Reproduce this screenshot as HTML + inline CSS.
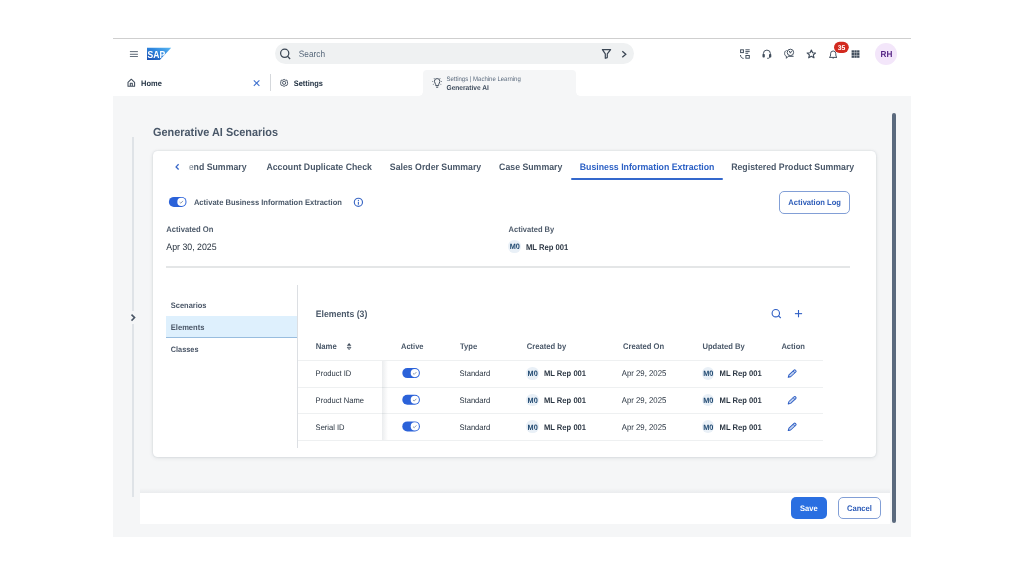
<!DOCTYPE html>
<html><head><meta charset="utf-8"><style>
html,body{margin:0;padding:0;background:#fff;width:1024px;height:576px;overflow:hidden}
body{position:relative;font-family:"Liberation Sans",sans-serif}
.r{position:absolute}
svg.ov{position:absolute;left:0;top:0;will-change:transform}
svg.ov text{font-family:"Liberation Sans",sans-serif;text-rendering:geometricPrecision}
</style></head><body>
<div class="r" style="left:113px;top:38px;width:798px;height:1px;background:#cfcfcf"></div>
<div class="r" style="left:113px;top:39px;width:798px;height:57px;background:#fff"></div>
<div class="r" style="left:113px;top:96px;width:798px;height:441px;background:#f5f6f7"></div>
<div class="r" style="left:275px;top:42.8px;width:359px;height:21.4px;background:#eff1f2;border-radius:10.7px"></div>
<div class="r" style="left:875.3px;top:43.2px;width:22px;height:22px;background:#f3e6fa;border-radius:50%"></div>
<div class="r" style="left:269.8px;top:74.3px;width:1.1px;height:17.2px;background:#d5d8dc"></div>
<div class="r" style="left:423px;top:70px;width:153px;height:26px;background:#f5f6f7;border-radius:4px 4px 0 0"></div>
<div class="r" style="left:419px;top:92px;width:4px;height:4px;background:radial-gradient(circle at 0 0,#fff 3.5px,#f5f6f7 4px)"></div>
<div class="r" style="left:576px;top:92px;width:4px;height:4px;background:radial-gradient(circle at 100% 0,#fff 3.5px,#f5f6f7 4px)"></div>
<div class="r" style="left:132.2px;top:137px;width:1.8px;height:173.6px;background:#dfe3e7"></div>
<div class="r" style="left:132.2px;top:324px;width:1.8px;height:173px;background:#dfe3e7"></div>
<div class="r" style="left:152.6px;top:150.8px;width:723.6px;height:306px;background:#fff;border-radius:4.5px;box-shadow:0 0 2px rgba(34,53,72,.15),0 1px 4px rgba(34,53,72,.10)"></div>
<div class="r" style="left:570.5px;top:177.8px;width:152.3px;height:2px;background:#3468cc;border-radius:1px"></div>
<div class="r" style="left:779px;top:191.2px;width:71px;height:22.4px;box-sizing:border-box;border:1px solid #829fd6;border-radius:5px;background:#fff"></div>
<div class="r" style="left:508.4px;top:240.0px;width:12.6px;height:12.6px;background:#e9f0f7;border-radius:50%"></div>
<div class="r" style="left:166px;top:266.1px;width:684px;height:1.8px;background:#e4e6e7"></div>
<div class="r" style="left:166.3px;top:316px;width:130.5px;height:21px;background:#def0fd"></div>
<div class="r" style="left:166.3px;top:336.6px;width:130.5px;height:1px;background:#98bddf"></div>
<div class="r" style="left:297px;top:285px;width:1px;height:163px;background:#dcdfe3"></div>
<div class="r" style="left:298px;top:360px;width:525px;height:1px;background:#eef0f1"></div>
<div class="r" style="left:298px;top:386.6px;width:525px;height:1px;background:#eef0f1"></div>
<div class="r" style="left:298px;top:413.3px;width:525px;height:1px;background:#eef0f1"></div>
<div class="r" style="left:298px;top:440px;width:525px;height:1px;background:#eef0f1"></div>
<div class="r" style="left:382px;top:361px;width:6px;height:79px;background:linear-gradient(90deg,rgba(34,53,72,.09),rgba(34,53,72,0))"></div>
<div class="r" style="left:526.2px;top:367.1px;width:12.6px;height:12.6px;background:#e9f0f7;border-radius:50%"></div>
<div class="r" style="left:701.9px;top:367.1px;width:12.6px;height:12.6px;background:#e9f0f7;border-radius:50%"></div>
<div class="r" style="left:526.2px;top:393.75px;width:12.6px;height:12.6px;background:#e9f0f7;border-radius:50%"></div>
<div class="r" style="left:701.9px;top:393.75px;width:12.6px;height:12.6px;background:#e9f0f7;border-radius:50%"></div>
<div class="r" style="left:526.2px;top:420.4px;width:12.6px;height:12.6px;background:#e9f0f7;border-radius:50%"></div>
<div class="r" style="left:701.9px;top:420.4px;width:12.6px;height:12.6px;background:#e9f0f7;border-radius:50%"></div>
<div class="r" style="left:140px;top:488px;width:750px;height:5px;background:linear-gradient(180deg,rgba(34,53,72,0),rgba(34,53,72,.05))"></div>
<div class="r" style="left:140px;top:493px;width:750px;height:30.7px;background:#fff"></div>
<div class="r" style="left:791px;top:497.4px;width:35.8px;height:22.1px;background:#2a6fe1;border-radius:5px"></div>
<div class="r" style="left:838.2px;top:497.4px;width:42.5px;height:22.1px;box-sizing:border-box;border:1px solid #829fd6;border-radius:5px;background:#fff"></div>
<div class="r" style="left:891.5px;top:113px;width:4.8px;height:409.5px;background:#5b6a7e;border-radius:2.4px"></div>
<svg class="ov" width="1024" height="576" viewBox="0 0 1024 576">
<g stroke="#66717e" stroke-width="1.05"><line x1="129.9" y1="51.6" x2="137.9" y2="51.6"/><line x1="129.9" y1="54.3" x2="137.9" y2="54.3"/><line x1="129.9" y1="56.5" x2="137.9" y2="56.5"/></g>
<defs><linearGradient id="sg" x1="0" y1="1" x2="1" y2="0"><stop offset="0" stop-color="#1b4fb0"/><stop offset="0.55" stop-color="#2e86de"/><stop offset="1" stop-color="#5ab8f2"/></linearGradient><clipPath id="sc"><polygon points="147,47.8 171.2,47.8 159.8,59.9 147,59.9"/></clipPath></defs><polygon points="147,47.8 171.2,47.8 159.8,59.9 147,59.9" fill="url(#sg)"/><text x="147.6" y="57.6" font-size="10.2" font-weight="700" fill="#fff" textLength="17.6" lengthAdjust="spacingAndGlyphs" clip-path="url(#sc)">SAP</text>
<g fill="none" stroke="#3b4654" stroke-width="1.25"><circle cx="284.7" cy="53.3" r="4.1"/><line x1="287.7" y1="56.3" x2="290.1" y2="59.0"/></g>
<text x="298.80" y="57.20" font-size="9.30" fill="#56677a" textLength="26.30" lengthAdjust="spacingAndGlyphs">Search</text>
<path d="M602.4,49.6 H610.6 L607.3,53.8 V57.6 L605.3,58.3 V53.8 Z" fill="none" stroke="#3b4654" stroke-width="1.2" stroke-linejoin="round"/>
<path d="M622.3,51.2 L625.8,54.3 L622.3,57.3" fill="none" stroke="#3b4654" stroke-width="1.3"/>
<g fill="none" stroke="#414d5c" stroke-width="0.98"><rect x="740.6" y="49.8" width="2.8" height="2.8"/><line x1="745.4" y1="49.8" x2="749.7" y2="49.8"/><line x1="745.4" y1="51.6" x2="749.7" y2="51.6"/><line x1="745.4" y1="53.3" x2="748.2" y2="53.3"/><rect x="745.9" y="55.5" width="3.4" height="2.7"/><path d="M740.5,55 C740.6,57 741.5,58.2 743.6,58.4"/><path d="M763.4,55.6 V53.6 A3.4,3.4 0 0 1 770.4,53.6 V55.6"/><path d="M769.8,57.2 C769.4,58.2 768.6,58.3 767.2,58.3"/><path d="M786.6,50.5 C785,50.9 784.6,52.2 784.6,53.5 C784.6,55.2 785.5,56 786.4,56.2 L786.4,58.3 L788.2,56.3 H793.6"/><circle cx="790.4" cy="52.4" r="3.2"/><path d="M789.2,50.9 L790.4,53.2 L791.6,50.9"/><path d="M811.35,50 L812.6,52.7 L815.5,53 L813.3,54.9 L814,57.8 L811.35,56.3 L808.7,57.8 L809.4,54.9 L807.2,53 L810.1,52.7 Z" stroke-linejoin="round" stroke-width="1.15"/><path d="M829.4,57.4 C830.5,56.7 830.6,55.6 830.6,53.6 A2.6,2.6 0 0 1 835.8,53.6 C835.8,55.6 835.9,56.7 837,57.4 Z" stroke-linejoin="round"/></g><g fill="#414d5c"><rect x="762.5" y="53.9" width="2.3" height="3.7" rx="0.8"/><rect x="769" y="53.9" width="2.3" height="3.7" rx="0.8"/><rect x="832.4" y="57.6" width="1.6" height="0.8" rx="0.4"/></g>
<rect x="834" y="41.8" width="14.8" height="11.1" rx="5.55" fill="#d22a1f"/>
<text x="837.70" y="49.80" font-size="6.80" font-weight="700" fill="#fff">35</text>
<g fill="#414d5c"><rect x="851.60" y="50.30" width="2.35" height="2.3"/><rect x="851.60" y="52.90" width="2.35" height="2.3"/><rect x="851.60" y="55.50" width="2.35" height="2.3"/><rect x="854.35" y="50.30" width="2.35" height="2.3"/><rect x="854.35" y="52.90" width="2.35" height="2.3"/><rect x="854.35" y="55.50" width="2.35" height="2.3"/><rect x="857.10" y="50.30" width="2.35" height="2.3"/><rect x="857.10" y="52.90" width="2.35" height="2.3"/><rect x="857.10" y="55.50" width="2.35" height="2.3"/></g>
<text x="880.60" y="56.90" font-size="8.77" font-weight="700" fill="#562585" textLength="11.84" lengthAdjust="spacingAndGlyphs">RH</text>
<path d="M128,86.3 V82.3 L131.3,79.2 L134.6,82.3 V86.3 Z M130.3,86.3 V83.2 H132.3 V86.3" fill="none" stroke="#414d5c" stroke-width="1.05" stroke-linejoin="round"/>
<text x="141.10" y="85.60" font-size="8.01" font-weight="700" fill="#1d2d3e" textLength="20.81" lengthAdjust="spacingAndGlyphs">Home</text>
<g stroke="#3d6fce" stroke-width="1.1"><line x1="253.8" y1="80.4" x2="259.4" y2="85.8"/><line x1="259.4" y1="80.4" x2="253.8" y2="85.8"/></g>
<g fill="none" stroke="#4d5968" stroke-width="0.95" stroke-linejoin="round"><circle cx="284.1" cy="82.85" r="1.6"/><path d="M284.1,79.3 L285.4,80.2 L287,80.2 L287.4,81.8 L287.6,83.6 L287,85.3 L285.5,85.6 L284.1,86.4 L282.7,85.6 L281.2,85.3 L280.6,83.6 L280.8,81.8 L281.2,80.2 L282.8,80.2 Z"/></g>
<text x="293.80" y="85.80" font-size="7.92" font-weight="700" fill="#1d2d3e" textLength="29.19" lengthAdjust="spacingAndGlyphs">Settings</text>
<g fill="none" stroke="#414d5c" stroke-width="1"><path d="M435.7,85.6 V84.6 C435.7,83.6 434.4,82.8 434.4,81.3 A2.75,2.75 0 0 1 439.9,81.3 C439.9,82.8 438.6,83.6 438.6,84.6 V85.6 Z"/><line x1="436.1" y1="87.2" x2="438.2" y2="87.2"/></g><g fill="#414d5c" opacity="0.8"><circle cx="434.2" cy="78.4" r="0.5"/><circle cx="440" cy="78.4" r="0.5"/><circle cx="432.7" cy="81.4" r="0.5"/><circle cx="441.5" cy="81.4" r="0.5"/><circle cx="433.3" cy="84.3" r="0.5"/><circle cx="440.9" cy="84.3" r="0.5"/></g>
<text x="446.50" y="81.10" font-size="6.42" fill="#5a6a7d" textLength="74.27" lengthAdjust="spacingAndGlyphs">Settings | Machine Learning</text>
<text x="446.50" y="89.90" font-size="7.06" font-weight="700" fill="#3c4a5b" textLength="42.31" lengthAdjust="spacingAndGlyphs">Generative AI</text>
<path d="M131.5,314.6 L134.6,317.6 L131.5,320.6" fill="none" stroke="#485464" stroke-width="1.5"/>
<text x="153.00" y="135.70" font-size="11.66" font-weight="700" fill="#4a5869" textLength="125.00" lengthAdjust="spacingAndGlyphs">Generative AI Scenarios</text>
<path d="M178.6,164.3 L176.1,166.9 L178.6,169.5" fill="none" stroke="#3867c8" stroke-width="1.3"/>
<defs><linearGradient id="fadeg" x1="0" x2="1"><stop offset="0" stop-color="#fff" stop-opacity="0.85"/><stop offset="1" stop-color="#fff" stop-opacity="0"/></linearGradient></defs>
<text x="188.70" y="170.30" font-size="9.36" font-weight="700" fill="#4a5869" textLength="57.87" lengthAdjust="spacingAndGlyphs">end Summary</text>
<rect x="186" y="160" width="10" height="14" fill="url(#fadeg)"/>
<text x="266.40" y="170.30" font-size="9.36" font-weight="700" fill="#4a5869" textLength="105.51" lengthAdjust="spacingAndGlyphs">Account Duplicate Check</text>
<text x="389.80" y="170.30" font-size="9.36" font-weight="700" fill="#4a5869" textLength="91.44" lengthAdjust="spacingAndGlyphs">Sales Order Summary</text>
<text x="499.10" y="170.30" font-size="9.36" font-weight="700" fill="#4a5869" textLength="63.23" lengthAdjust="spacingAndGlyphs">Case Summary</text>
<text x="579.80" y="170.30" font-size="9.36" font-weight="700" fill="#2a5fc4" textLength="134.68" lengthAdjust="spacingAndGlyphs">Business Information Extraction</text>
<text x="731.20" y="170.30" font-size="9.36" font-weight="700" fill="#4a5869" textLength="123.02" lengthAdjust="spacingAndGlyphs">Registered Product Summary</text>
<g transform="translate(168.9,196.9)"><rect x="0" y="0" width="17.6" height="10" rx="5" fill="#2b62d9"/><circle cx="12.5" cy="5" r="4.1" fill="#fff"/><path d="M10.7,5.2 L11.9,6.3 L14.1,4" fill="none" stroke="#7183a0" stroke-width="0.8"/></g>
<text x="193.90" y="205.20" font-size="8.10" font-weight="700" fill="#4a5869" textLength="148.07" lengthAdjust="spacingAndGlyphs">Activate Business Information Extraction</text>
<g fill="none" stroke="#3a67c4" stroke-width="1.15"><circle cx="358.4" cy="202.3" r="4.1"/></g><line x1="358.4" y1="201.8" x2="358.4" y2="204.8" stroke="#3a67c4" stroke-width="1.1"/><circle cx="358.4" cy="200.4" r="0.65" fill="#3a67c4"/>
<text x="788.30" y="204.50" font-size="8.12" font-weight="700" fill="#2d5cb8" textLength="52.71" lengthAdjust="spacingAndGlyphs">Activation Log</text>
<text x="166.30" y="231.50" font-size="8.19" font-weight="700" fill="#4e5b6b" textLength="47.19" lengthAdjust="spacingAndGlyphs">Activated On</text>
<text x="166.30" y="249.60" font-size="9.39" fill="#27323f" textLength="50.28" lengthAdjust="spacingAndGlyphs">Apr 30, 2025</text>
<text x="508.60" y="231.50" font-size="8.06" font-weight="700" fill="#4e5b6b" textLength="45.61" lengthAdjust="spacingAndGlyphs">Activated By</text>
<text x="509.80" y="249.30" font-size="7.81" font-weight="700" fill="#1b456e" textLength="10.14" lengthAdjust="spacingAndGlyphs">M0</text>
<text x="525.90" y="249.50" font-size="8.21" font-weight="700" fill="#2d3845" textLength="42.48" lengthAdjust="spacingAndGlyphs">ML Rep 001</text>
<text x="170.80" y="307.60" font-size="7.99" font-weight="700" fill="#4a5667" textLength="35.71" lengthAdjust="spacingAndGlyphs">Scenarios</text>
<text x="170.80" y="329.80" font-size="8.09" font-weight="700" fill="#4a5667" textLength="33.61" lengthAdjust="spacingAndGlyphs">Elements</text>
<text x="170.80" y="351.80" font-size="7.84" font-weight="700" fill="#4a5667" textLength="27.71" lengthAdjust="spacingAndGlyphs">Classes</text>
<text x="315.70" y="317.10" font-size="9.29" font-weight="700" fill="#4a5869" textLength="51.61" lengthAdjust="spacingAndGlyphs">Elements (3)</text>
<g fill="none" stroke="#2f5fc4" stroke-width="1.1"><circle cx="775.8" cy="313.2" r="3.7"/><line x1="778.5" y1="315.9" x2="780.8" y2="318"/></g>
<g stroke="#2f5fc4" stroke-width="1.1"><line x1="798.5" y1="310" x2="798.5" y2="317.3"/><line x1="794.9" y1="313.65" x2="802.1" y2="313.65"/></g>
<text x="315.70" y="349.30" font-size="8.29" font-weight="700" fill="#4a5869" textLength="21.11" lengthAdjust="spacingAndGlyphs">Name</text>
<path d="M349.1,343 L351.4,345.8 H346.8 Z" fill="#414d5c"/><path d="M347.3,347.3 H350.9 L349.1,349.6 Z" fill="none" stroke="#414d5c" stroke-width="0.9" stroke-linejoin="round"/>
<text x="401.00" y="349.30" font-size="8.03" font-weight="700" fill="#4a5869" textLength="22.51" lengthAdjust="spacingAndGlyphs">Active</text>
<text x="460.00" y="349.30" font-size="8.14" font-weight="700" fill="#4a5869" textLength="17.20" lengthAdjust="spacingAndGlyphs">Type</text>
<text x="526.70" y="349.30" font-size="8.17" font-weight="700" fill="#4a5869" textLength="39.49" lengthAdjust="spacingAndGlyphs">Created by</text>
<text x="622.90" y="349.30" font-size="8.17" font-weight="700" fill="#4a5869" textLength="41.18" lengthAdjust="spacingAndGlyphs">Created On</text>
<text x="702.40" y="349.30" font-size="8.14" font-weight="700" fill="#4a5869" textLength="42.28" lengthAdjust="spacingAndGlyphs">Updated By</text>
<text x="781.40" y="349.30" font-size="8.12" font-weight="700" fill="#4a5869" textLength="23.61" lengthAdjust="spacingAndGlyphs">Action</text>
<text x="315.60" y="376.30" font-size="8.09" fill="#27323f" textLength="35.71" lengthAdjust="spacingAndGlyphs">Product ID</text>
<g transform="translate(402.3,368.1)"><rect x="0" y="0" width="17.6" height="10" rx="5" fill="#2b62d9"/><circle cx="12.5" cy="5" r="4.1" fill="#fff"/><path d="M10.7,5.2 L11.9,6.3 L14.1,4" fill="none" stroke="#7183a0" stroke-width="0.8"/></g>
<text x="459.50" y="376.30" font-size="8.12" fill="#27323f" textLength="30.80" lengthAdjust="spacingAndGlyphs">Standard</text>
<text x="527.60" y="376.40" font-size="7.81" font-weight="700" fill="#1b456e" textLength="10.14" lengthAdjust="spacingAndGlyphs">M0</text>
<text x="543.90" y="376.30" font-size="8.15" font-weight="700" fill="#2d3845" textLength="42.21" lengthAdjust="spacingAndGlyphs">ML Rep 001</text>
<text x="621.80" y="376.30" font-size="8.31" fill="#27323f" textLength="44.50" lengthAdjust="spacingAndGlyphs">Apr 29, 2025</text>
<text x="703.30" y="376.40" font-size="7.81" font-weight="700" fill="#1b456e" textLength="10.14" lengthAdjust="spacingAndGlyphs">M0</text>
<text x="719.60" y="376.30" font-size="8.15" font-weight="700" fill="#2d3845" textLength="42.21" lengthAdjust="spacingAndGlyphs">ML Rep 001</text>
<g transform="translate(788.2,377.30) rotate(-43) scale(0.92,0.85)"><path d="M0,0 L2.4,-1.5 H10 Q11,-1.5 11,-0.6 V0.6 Q11,1.5 10,1.5 H2.4 Z" fill="#c3d3f0" stroke="#2f5fc4" stroke-width="1.05" stroke-linejoin="round"/><line x1="8.6" y1="-1.5" x2="8.6" y2="1.5" stroke="#2f5fc4" stroke-width="0.9"/><path d="M0,0 L1.6,-0.9 V0.9 Z" fill="#2f5fc4"/></g>
<text x="315.60" y="402.95" font-size="8.09" fill="#27323f" textLength="48.32" lengthAdjust="spacingAndGlyphs">Product Name</text>
<g transform="translate(402.3,394.75)"><rect x="0" y="0" width="17.6" height="10" rx="5" fill="#2b62d9"/><circle cx="12.5" cy="5" r="4.1" fill="#fff"/><path d="M10.7,5.2 L11.9,6.3 L14.1,4" fill="none" stroke="#7183a0" stroke-width="0.8"/></g>
<text x="459.50" y="402.95" font-size="8.12" fill="#27323f" textLength="30.80" lengthAdjust="spacingAndGlyphs">Standard</text>
<text x="527.60" y="403.05" font-size="7.81" font-weight="700" fill="#1b456e" textLength="10.14" lengthAdjust="spacingAndGlyphs">M0</text>
<text x="543.90" y="402.95" font-size="8.15" font-weight="700" fill="#2d3845" textLength="42.21" lengthAdjust="spacingAndGlyphs">ML Rep 001</text>
<text x="621.80" y="402.95" font-size="8.31" fill="#27323f" textLength="44.50" lengthAdjust="spacingAndGlyphs">Apr 29, 2025</text>
<text x="703.30" y="403.05" font-size="7.81" font-weight="700" fill="#1b456e" textLength="10.14" lengthAdjust="spacingAndGlyphs">M0</text>
<text x="719.60" y="402.95" font-size="8.15" font-weight="700" fill="#2d3845" textLength="42.21" lengthAdjust="spacingAndGlyphs">ML Rep 001</text>
<g transform="translate(788.2,403.95) rotate(-43) scale(0.92,0.85)"><path d="M0,0 L2.4,-1.5 H10 Q11,-1.5 11,-0.6 V0.6 Q11,1.5 10,1.5 H2.4 Z" fill="#c3d3f0" stroke="#2f5fc4" stroke-width="1.05" stroke-linejoin="round"/><line x1="8.6" y1="-1.5" x2="8.6" y2="1.5" stroke="#2f5fc4" stroke-width="0.9"/><path d="M0,0 L1.6,-0.9 V0.9 Z" fill="#2f5fc4"/></g>
<text x="315.60" y="429.60" font-size="8.09" fill="#27323f" textLength="28.99" lengthAdjust="spacingAndGlyphs">Serial ID</text>
<g transform="translate(402.3,421.40000000000003)"><rect x="0" y="0" width="17.6" height="10" rx="5" fill="#2b62d9"/><circle cx="12.5" cy="5" r="4.1" fill="#fff"/><path d="M10.7,5.2 L11.9,6.3 L14.1,4" fill="none" stroke="#7183a0" stroke-width="0.8"/></g>
<text x="459.50" y="429.60" font-size="8.12" fill="#27323f" textLength="30.80" lengthAdjust="spacingAndGlyphs">Standard</text>
<text x="527.60" y="429.70" font-size="7.81" font-weight="700" fill="#1b456e" textLength="10.14" lengthAdjust="spacingAndGlyphs">M0</text>
<text x="543.90" y="429.60" font-size="8.15" font-weight="700" fill="#2d3845" textLength="42.21" lengthAdjust="spacingAndGlyphs">ML Rep 001</text>
<text x="621.80" y="429.60" font-size="8.31" fill="#27323f" textLength="44.50" lengthAdjust="spacingAndGlyphs">Apr 29, 2025</text>
<text x="703.30" y="429.70" font-size="7.81" font-weight="700" fill="#1b456e" textLength="10.14" lengthAdjust="spacingAndGlyphs">M0</text>
<text x="719.60" y="429.60" font-size="8.15" font-weight="700" fill="#2d3845" textLength="42.21" lengthAdjust="spacingAndGlyphs">ML Rep 001</text>
<g transform="translate(788.2,430.60) rotate(-43) scale(0.92,0.85)"><path d="M0,0 L2.4,-1.5 H10 Q11,-1.5 11,-0.6 V0.6 Q11,1.5 10,1.5 H2.4 Z" fill="#c3d3f0" stroke="#2f5fc4" stroke-width="1.05" stroke-linejoin="round"/><line x1="8.6" y1="-1.5" x2="8.6" y2="1.5" stroke="#2f5fc4" stroke-width="0.9"/><path d="M0,0 L1.6,-0.9 V0.9 Z" fill="#2f5fc4"/></g>
<text x="800.10" y="511.00" font-size="8.07" font-weight="700" fill="#fff" textLength="17.61" lengthAdjust="spacingAndGlyphs">Save</text>
<text x="847.00" y="511.00" font-size="8.13" font-weight="700" fill="#2d5cb8" textLength="24.92" lengthAdjust="spacingAndGlyphs">Cancel</text>
</svg>
</body></html>
